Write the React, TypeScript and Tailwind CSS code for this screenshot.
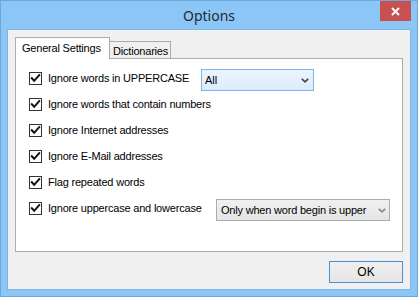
import React from "react";

const font = { fontFamily: '"Liberation Sans", Arial, sans-serif' };

function Check() {
  return (
    <div className="w-[13px] h-[13px] border border-[#333333] bg-white flex items-center justify-center shrink-0">
      <svg width="11" height="11" viewBox="0 0 11 11">
        <path d="M1.8 5.2 L4.2 7.8 L9.2 2.2" fill="none" stroke="#111" strokeWidth="2" strokeLinecap="square" />
      </svg>
    </div>
  );
}

function Chevron({ color }: { color: string }) {
  return (
    <svg width="8" height="5" viewBox="0 0 8 5">
      <path d="M0.8 0.8 L4 3.8 L7.2 0.8" fill="none" stroke={color} strokeWidth="1.6" />
    </svg>
  );
}

function Row({ label, labelW, children }: { label: string; labelW?: string; children?: React.ReactNode }) {
  return (
    <div className="flex h-[26px] items-center">
      <Check />
      <div className={`ml-[6px] text-[11px] tracking-[-0.2px] text-black whitespace-nowrap ${labelW ?? ""}`}>{label}</div>
      {children}
    </div>
  );
}

export default function App() {
  return (
    <div className="w-[418px] h-[297px] bg-[#8bc6f6] border border-[#6aa8de] flex flex-col" style={font}>
      <div className="h-[28px] relative flex items-center justify-center shrink-0">
        <span className="text-[14px] text-[#1f2a33]" style={{ fontFamily: '"Noto Sans", "Liberation Sans", sans-serif' }}>
          Options
        </span>
        <div className="absolute top-0 right-[6px] w-[31px] h-[20px] bg-[#c75050] flex items-center justify-center">
          <svg width="9" height="9" viewBox="0 0 9 9">
            <path d="M1 1 L8 8 M8 1 L1 8" stroke="#fff" strokeWidth="2" />
          </svg>
        </div>
      </div>
      <div className="flex-1 mx-[6px] mb-[6px] border border-[#7db6e6] bg-[#f0f0f0] pt-[7px] px-[7px] flex flex-col">
        <div className="h-[22px] flex items-end">
          <div className="h-[22px] w-[95px] border-t border-x border-[#acacac] bg-white relative z-10 flex items-center pl-[6px] pb-[1px] text-[11px] tracking-[-0.2px] text-black">
            General Settings
          </div>
          <div className="h-[18px] w-[61px] border-t border-r border-[#acacac] bg-[#f0f0f0] flex items-center pl-[3px] pt-[1px] text-[11px] tracking-[-0.2px] text-black">
            Dictionaries
          </div>
        </div>
        <div className="-mt-px h-[194px] border border-[#acacac] bg-white pt-[6px] pl-[13px]">
          <Row label="Ignore words in UPPERCASE" labelW="w-[153px]">
            <div className="self-end w-[113px] h-[22px] border border-[#7eb4ea] bg-gradient-to-b from-[#ecf4fc] to-[#dcecfc] flex items-center justify-between pl-[3px] pr-[4px] text-[11px] text-black">
              <span>All</span>
              <Chevron color="#444" />
            </div>
          </Row>
          <Row label="Ignore words that contain numbers" />
          <Row label="Ignore Internet addresses" />
          <Row label="Ignore E-Mail addresses" />
          <Row label="Flag repeated words" />
          <Row label="Ignore uppercase and lowercase" labelW="w-[168px]">
            <div className="self-end w-[174px] h-[22px] border border-[#acacac] bg-gradient-to-b from-[#f0f0f0] to-[#e5e5e5] flex items-center justify-between pl-[4px] pr-[3px] text-[11px] tracking-[-0.2px] text-black">
              <span>Only when word begin is upper</span>
              <Chevron color="#8a8a8a" />
            </div>
          </Row>
        </div>
        <div className="flex justify-end mt-[9px]">
          <div className="w-[74px] h-[22px] border border-[#4a90d9] bg-gradient-to-b from-[#f0f0f0] to-[#e5e5e5] flex items-center justify-center text-[12px] text-black">
            OK
          </div>
        </div>
      </div>
    </div>
  );
}
